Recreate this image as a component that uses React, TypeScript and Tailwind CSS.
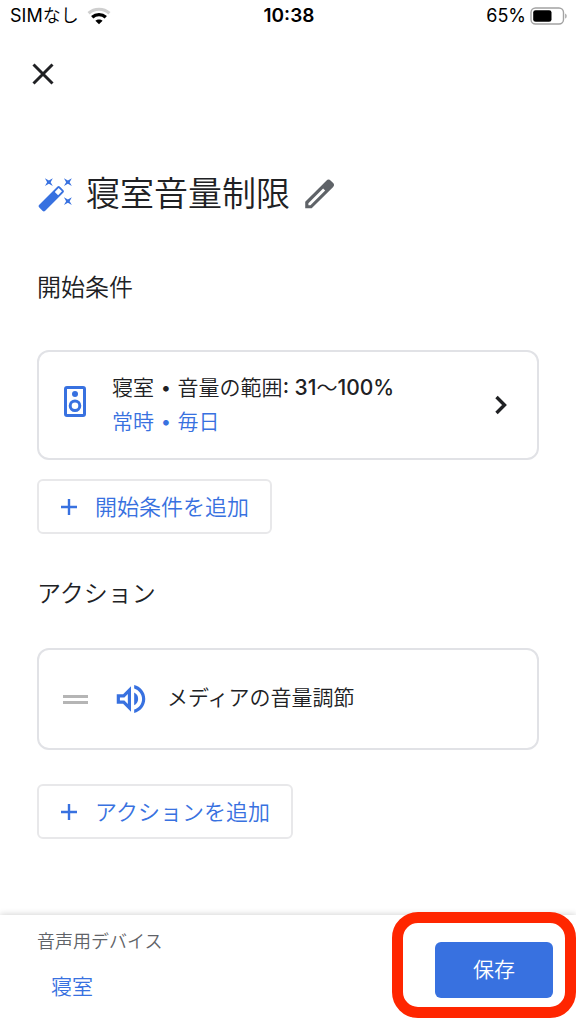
import type { ReactNode } from "react";

const blue = "text-[#3871e0]";

function CloseIcon() {
  return (
    <svg viewBox="0 0 24 24" className="size-6" aria-hidden="true">
      <path d="M2.5 2.5 21.5 21.5M21.5 2.5 2.5 21.5" stroke="currentColor" strokeWidth="3" fill="none" />
    </svg>
  );
}

function WifiIcon() {
  return (
    <svg viewBox="0 0 24 18" className="h-[18px] w-6" aria-hidden="true">
      <path d="M1.6 6.2C7.4.9 16.6.9 22.4 6.2" stroke="#cfcfcf" strokeWidth="3.2" fill="none" />
      <path d="M5.2 10.2c3.9-3.5 9.7-3.5 13.6 0" stroke="#000" strokeWidth="3.4" fill="none" />
      <path d="M12 17.2 8.4 13.8c1.9-1.8 5.3-1.8 7.2 0z" fill="#000" />
    </svg>
  );
}

function BatteryIcon() {
  return (
    <svg viewBox="0 0 38 18" className="h-[18px] w-[38px]" aria-hidden="true">
      <rect x="1" y="1" width="32.5" height="16" rx="4.5" stroke="#a3a3a3" strokeWidth="1.4" fill="none" />
      <rect x="3.2" y="3.2" width="18.3" height="11.6" rx="2.4" fill="#000" />
      <path d="M35.2 6.4c1.9.8 1.9 4.4 0 5.2z" fill="#a3a3a3" />
    </svg>
  );
}

function WandIcon() {
  return (
    <svg viewBox="0 0 24 24" className={`size-[38px] shrink-0 ${blue}`} fill="currentColor" aria-hidden="true">
      <path d="M7.5 5.6 10 7 8.6 4.5 10 2 7.5 3.4 5 2l1.4 2.5L5 7zm12 9.8L17 14l1.4 2.5L17 19l2.5-1.4L22 19l-1.4-2.5L22 14zM22 2l-2.5 1.4L17 2l1.4 2.5L17 7l2.5-1.4L22 7l-1.4-2.5zm-7.63 5.29a.996.996 0 0 0-1.41 0L1.29 18.96a.996.996 0 0 0 0 1.41l2.34 2.34c.39.39 1.02.39 1.41 0L16.7 11.05a.996.996 0 0 0 0-1.41zm-1.03 5.49-2.12-2.12 2.44-2.44 2.12 2.12z" />
    </svg>
  );
}

function PencilIcon() {
  return (
    <svg viewBox="0 0 24 24" className="size-[38px]" fill="currentColor" fillRule="evenodd" aria-hidden="true">
      <path d="M20.8 4.94 19.45 3.59a2 2 0 0 0-2.83 0L3.3 16.92V21h4.08L20.8 7.77a2 2 0 0 0 0-2.83zM6.6 19.1H5.3v-1.3L14.6 8.5l1.3 1.3z" />
    </svg>
  );
}

function SpeakerIcon() {
  return (
    <svg viewBox="0 0 22 31" className={`h-[31px] w-[22px] shrink-0 ${blue}`} aria-hidden="true">
      <rect x="1.5" y="1.5" width="19" height="28" rx="1.5" stroke="currentColor" strokeWidth="3" fill="none" />
      <circle cx="11" cy="8" r="3" fill="currentColor" />
      <circle cx="11" cy="19.7" r="4.8" stroke="currentColor" strokeWidth="3" fill="none" />
    </svg>
  );
}

function VolumeIcon() {
  return (
    <svg viewBox="0 0 24 24" className={`size-[38px] shrink-0 ${blue}`} fill="currentColor" aria-hidden="true">
      <path d="M3 9v6h4l5 5V4L7 9zm7-.17v6.34L7.83 13H5v-2h2.83zM16.5 12A4.5 4.5 0 0 0 14 7.97v8.05c1.48-.73 2.5-2.25 2.5-4.02M14 3.23v2.06c2.89.86 5 3.54 5 6.71s-2.11 5.85-5 6.71v2.06c4.01-.91 7-4.49 7-8.77s-2.99-7.86-7-8.77" />
    </svg>
  );
}

function ChevronIcon() {
  return (
    <svg viewBox="0 0 12 20" className="h-5 w-3 shrink-0" aria-hidden="true">
      <path d="M1.5 2 9.5 10 1.5 18" stroke="currentColor" strokeWidth="3.4" fill="none" />
    </svg>
  );
}

function AddButton({ children }: { children: ReactNode }) {
  return (
    <button
      type="button"
      className="flex h-[55px] items-center gap-[17px] rounded-md border-2 border-[#e8e8ea] px-[21px] text-[#3871e0]"
    >
      <svg viewBox="0 0 18 18" className="size-[18px]" aria-hidden="true">
        <path d="M9 1v16M1 9h16" stroke="currentColor" strokeWidth="2.4" />
      </svg>
      <span className="text-[22px] leading-8">{children}</span>
    </button>
  );
}

export default function App() {
  return (
    <div className="flex min-h-screen flex-col bg-white font-['Inter','Noto_Sans_CJK_JP',sans-serif] font-[350] text-[#202124]">
      <header>
        <div className="grid h-8 grid-cols-3 items-center pr-2 pl-[10px] text-lg text-black">
          <div className="flex items-center gap-2 font-normal">
            <span>
              SIM<span className="font-[350]">なし</span>
            </span>
            <WifiIcon />
          </div>
          <time className="text-center text-[19px] font-semibold">10:38</time>
          <div className="flex items-center justify-end gap-1 font-normal">
            <span>65%</span>
            <BatteryIcon />
          </div>
        </div>
        <button type="button" aria-label="閉じる" className="mt-5 ml-[21px] flex size-11 items-center justify-center">
          <CloseIcon />
        </button>
      </header>

      <main className="flex flex-1 flex-col px-[37px] pt-[73px] pb-[74px]">
        <div className="flex items-center">
          <WandIcon />
          <h1 className="ml-[11px] text-[34px] leading-[50px]">寝室音量制限</h1>
          <button type="button" aria-label="名前を編集" className="ml-[10px] text-[#5f6368]">
            <PencilIcon />
          </button>
        </div>

        <section className="mt-[51px]">
          <h2 className="text-2xl leading-9">開始条件</h2>
          <button
            type="button"
            className="mt-11 flex h-[110px] w-full items-center rounded-xl border-2 border-[#e1e2e6] pr-[30px] pl-[25px] text-left"
          >
            <span className="pb-2">
              <SpeakerIcon />
            </span>
            <span className="ml-[26px] flex flex-1 flex-col text-[21px] leading-[34px]">
              <span>
                寝室 • 音量の範囲<span className="font-medium">: 31</span>〜<span className="font-medium">100%</span>
              </span>
              <span className="text-[#3871e0]">常時 • 毎日</span>
            </span>
            <ChevronIcon />
          </button>
          <div className="mt-[19px] flex">
            <AddButton>開始条件を追加</AddButton>
          </div>
        </section>

        <section className="mt-[42px]">
          <h2 className="text-2xl leading-9">アクション</h2>
          <div className="mt-9 flex h-[102px] items-center rounded-xl border-2 border-[#e1e2e6] px-6">
            <span className="mr-6 flex w-[25px] flex-col gap-[3px]">
              <span className="h-[3px] bg-[#b5b5b5]" />
              <span className="h-[3px] bg-[#b5b5b5]" />
            </span>
            <VolumeIcon />
            <span className="ml-[17px] pb-[2px] text-[21px] leading-8">メディアの音量調節</span>
          </div>
          <div className="mt-[34px] flex">
            <AddButton>アクションを追加</AddButton>
          </div>
        </section>
      </main>

      <footer className="flex h-[109px] items-center justify-between pr-[23px] pl-[37px] shadow-[0_-1px_6px_rgba(0,0,0,0.16)]">
        <div className="pb-2">
          <p className="text-lg leading-7 text-[#5f6368]">音声用デバイス</p>
          <a href="#device" className="mt-[15px] ml-[14px] block text-[21px] leading-8 text-[#3871e0]">
            寝室
          </a>
        </div>
        <div className="relative">
          <button type="button" className="h-14 w-[118px] rounded-md bg-[#3871e0] text-[21px] text-white">
            保存
          </button>
          <span className="pointer-events-none absolute -top-[30px] -right-[23px] -bottom-5 -left-[43px] rounded-[26px] border-[11px] border-[#ff2600]" />
        </div>
      </footer>
    </div>
  );
}
